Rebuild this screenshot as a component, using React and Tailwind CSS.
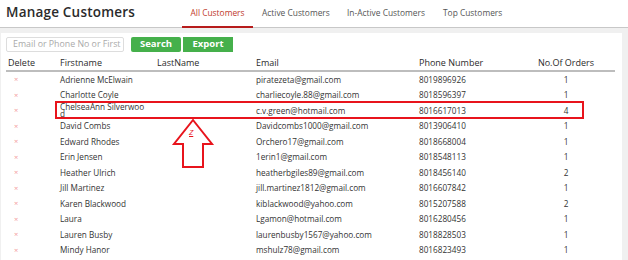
import React from "react";

const rows = [
  ["Adrienne McElwain", "piratezeta@gmail.com", "8019896926", "1"],
  ["Charlotte Coyle", "charliecoyle.88@gmail.com", "8018596397", "1"],
  ["ChelseaAnn Silverwoo|d", "c.v.green@hotmail.com", "8016617013", "4"],
  ["David Combs", "Davidcombs1000@gmail.com", "8013906410", "1"],
  ["Edward Rhodes", "Orchero17@gmail.com", "8018668004", "1"],
  ["Erin Jensen", "1erin1@gmail.com", "8018548113", "1"],
  ["Heather Ulrich", "heatherbgiles89@gmail.com", "8018456140", "2"],
  ["Jill Martinez", "jill.martinez1812@gmail.com", "8016607842", "1"],
  ["Karen Blackwood", "kiblackwood@yahoo.com", "8015207588", "2"],
  ["Laura", "Lgamon@hotmail.com", "8016280456", "1"],
  ["Lauren Busby", "laurenbusby1567@yahoo.com", "8018828503", "1"],
  ["Mindy Hanor", "mshulz78@gmail.com", "8016823493", "1"],
];

const cols = "grid grid-cols-[52px_97px_99px_163px_100px_98px]";

export default function App() {
  return (
    <div className="w-[628px] h-[260px] overflow-hidden bg-white text-[#333] font-['Open_Sans',sans-serif] relative">
      {/* Top bar */}
      <div className="h-[28px] flex items-end border-b border-[#c8c8c8]">
        <div className="pl-[6px] pb-[5px] text-[13.5px] leading-[20px] font-semibold text-[#2b2b2b] w-[182px] tracking-[0.2px]">
          Manage Customers
        </div>
        <div className="flex items-end text-[8.4px] font-medium text-[#555]">
          <div className="w-[71px] h-[28px] flex items-center justify-center text-[#c0392b] border-b-2 border-[#b71c1c] mb-[-1px]">
            All Customers
          </div>
          <div className="pl-[9px] w-[94px] h-[28px] flex items-center">Active Customers</div>
          <div className="w-[96px] h-[28px] flex items-center">In-Active Customers</div>
          <div className="h-[28px] flex items-center">Top Customers</div>
        </div>
      </div>

      {/* Gray area with card */}
      <div className="bg-[#f0f0f0] pt-[5px] pl-[1px] pr-[6px] h-[232px]">
        <div className="bg-white h-full pt-[4px] relative">
          <div className="flex items-center pl-[5px]">
            <div className="w-[118px] h-[15px] border border-[#ddd] rounded-[2px] flex items-center pl-[6px] text-[8.8px] text-[#aaa] whitespace-nowrap overflow-hidden">
              Email or Phone No or First
            </div>
            <div className="ml-[7px] w-[50px] h-[15px] bg-[#45b04b] rounded-[2px] flex items-center justify-center text-white text-[9.5px] font-bold">
              Search
            </div>
            <div className="ml-[2px] w-[50px] h-[15px] bg-[#45b04b] flex items-center justify-center text-white text-[9.5px] font-bold">
              Export
            </div>
          </div>

          <div className="ml-[5px] w-[609px]">
            <div className={`${cols} h-[20px] pt-[4px] items-center border-b-2 border-[#bdbdbd] text-[9px] font-medium text-[#2b2b2b]`}>
              <div className="pl-[2px]">Delete</div>
              <div className="pl-[2px]">Firstname</div>
              <div className="pl-[2px]">LastName</div>
              <div className="pl-[2px]">Email</div>
              <div className="pl-[2px]">Phone Number</div>
              <div className="text-center">No.Of Orders</div>
            </div>
            {rows.map((r, i) => {
              const name = r[0].split("|");
              return (
                <div key={i} className={`${cols} h-[15.5px] items-center text-[8.2px] font-medium text-[#333]`}>
                  <div className="pl-[8px] text-[#f39a9a] text-[7.5px]">×</div>
                  <div className="pl-[2px] leading-[6.5px] whitespace-nowrap">
                    {name[0]}
                    {name[1] && (
                      <>
                        <br />
                        {name[1]}
                      </>
                    )}
                  </div>
                  <div />
                  <div className="pl-[2px] whitespace-nowrap">{r[1]}</div>
                  <div className="pl-[2px]">{r[2]}</div>
                  <div className="text-center">{r[3]}</div>
                </div>
              );
            })}
          </div>
        </div>
      </div>

      {/* Annotation: red box */}
      <div className="absolute left-[55px] top-[101px] w-[529px] h-[18px] border-2 border-[#e8141c]" />
      {/* Annotation: arrow */}
      <svg className="absolute left-0 top-0" width="628" height="260" viewBox="0 0 628 260">
        <polygon
          points="193,120 212,144 203,144 203,167 183,167 183,144 174,144"
          fill="white"
          stroke="#e8141c"
          strokeWidth="2"
          strokeLinejoin="miter"
        />
      </svg>
      <div className="absolute left-[189px] top-[128px] text-[8px] leading-[8px] text-[#e8141c] italic underline">Z</div>
    </div>
  );
}
